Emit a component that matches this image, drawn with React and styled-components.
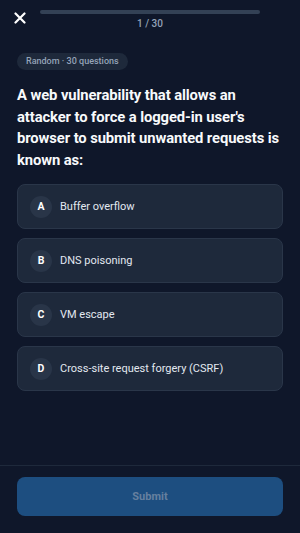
import React, { useState } from "react";
import styled, { createGlobalStyle } from "styled-components";

const GlobalStyle = createGlobalStyle`
  * { box-sizing: border-box; }
  body {
    margin: 0;
    background: #0f172a;
    font-family: Roboto, Inter, "Liberation Sans", sans-serif;
  }
`;

const options = [
  { letter: "A", text: "Buffer overflow" },
  { letter: "B", text: "DNS poisoning" },
  { letter: "C", text: "VM escape" },
  { letter: "D", text: "Cross-site request forgery (CSRF)" },
];

const App = () => {
  const [selected, setSelected] = useState(null);

  return (
    <Screen>
      <GlobalStyle />
      <Header>
        <CloseButton aria-label="Close">
          <svg width="12" height="12" viewBox="0 0 12 12">
            <path
              d="M1.5 1.5 L10.5 10.5 M10.5 1.5 L1.5 10.5"
              stroke="#ffffff"
              strokeWidth="2.2"
              strokeLinecap="round"
            />
          </svg>
        </CloseButton>
        <Progress>
          <Track>
            <Fill style={{ width: "0%" }} />
          </Track>
          <Counter>1 / 30</Counter>
        </Progress>
        <Spacer />
      </Header>

      <Main>
        <Badge>Random · 30 questions</Badge>
        <Question>
          A web vulnerability that allows an attacker to force a logged-in
          user's browser to submit unwanted requests is known as:
        </Question>
        <OptionList>
          {options.map((o) => (
            <Option
              key={o.letter}
              $active={selected === o.letter}
              onClick={() => setSelected(o.letter)}
            >
              <Letter>{o.letter}</Letter>
              <OptionText>{o.text}</OptionText>
            </Option>
          ))}
        </OptionList>
      </Main>

      <Footer>
        <SubmitButton disabled={!selected}>Submit</SubmitButton>
      </Footer>
    </Screen>
  );
};

export default App;

const Screen = styled.div`
  height: 533px;
  display: flex;
  flex-direction: column;
  background: #0f172a;
`;

const Header = styled.div`
  display: flex;
  align-items: flex-start;
  gap: 14px;
  padding: 10px 14px 0 14px;
`;

const CloseButton = styled.button`
  width: 12px;
  height: 12px;
  margin-top: 2px;
  padding: 0;
  border: none;
  background: none;
  display: flex;
  cursor: pointer;
`;

const Progress = styled.div`
  flex: 1;
  display: flex;
  flex-direction: column;
  align-items: center;
  gap: 4px;
`;

const Track = styled.div`
  width: 100%;
  height: 4px;
  border-radius: 2px;
  background: #334155;
  overflow: hidden;
`;

const Fill = styled.div`
  height: 100%;
  background: #3b82f6;
`;

const Counter = styled.div`
  font-size: 10px;
  line-height: 12px;
  color: #94a3b8;
  font-weight: 500;
`;

const Spacer = styled.div`
  width: 12px;
`;

const Main = styled.div`
  flex: 1;
  padding: 23px 17px 0 17px;
  display: flex;
  flex-direction: column;
  align-items: flex-start;
`;

const Badge = styled.div`
  height: 17px;
  padding: 0 9px;
  border-radius: 9px;
  background: #1e293b;
  color: #94a3b8;
  font-size: 9px;
  font-weight: 500;
  line-height: 17px;
`;

const Question = styled.h1`
  margin: 15px 0 0 0;
  color: #f8fafc;
  font-size: 14.8px;
  line-height: 21.5px;
  font-weight: 700;
  letter-spacing: -0.1px;
`;

const OptionList = styled.div`
  align-self: stretch;
  margin-top: 13px;
  display: flex;
  flex-direction: column;
  gap: 9px;
`;

const Option = styled.button`
  height: 45px;
  display: flex;
  align-items: center;
  gap: 8px;
  padding: 0 12px;
  border-radius: 8px;
  border: 1px solid ${(p) => (p.$active ? "#3b82f6" : "#2a3649")};
  background: #1e293b;
  font-family: inherit;
  text-align: left;
  cursor: pointer;
`;

const Letter = styled.span`
  width: 22px;
  height: 22px;
  border-radius: 50%;
  background: #293548;
  color: #ffffff;
  font-size: 10.5px;
  font-weight: 700;
  display: flex;
  align-items: center;
  justify-content: center;
  flex-shrink: 0;
`;

const OptionText = styled.span`
  color: #e2e8f0;
  font-size: 11px;
  font-weight: 400;
`;

const Footer = styled.div`
  border-top: 1px solid #1e293b;
  padding: 11px 17px 17px 17px;
`;

const SubmitButton = styled.button`
  width: 100%;
  height: 39px;
  border: none;
  border-radius: 8px;
  background: #1d4e80;
  color: #66809f;
  font-family: inherit;
  font-size: 11px;
  font-weight: 700;
  cursor: pointer;
`;
